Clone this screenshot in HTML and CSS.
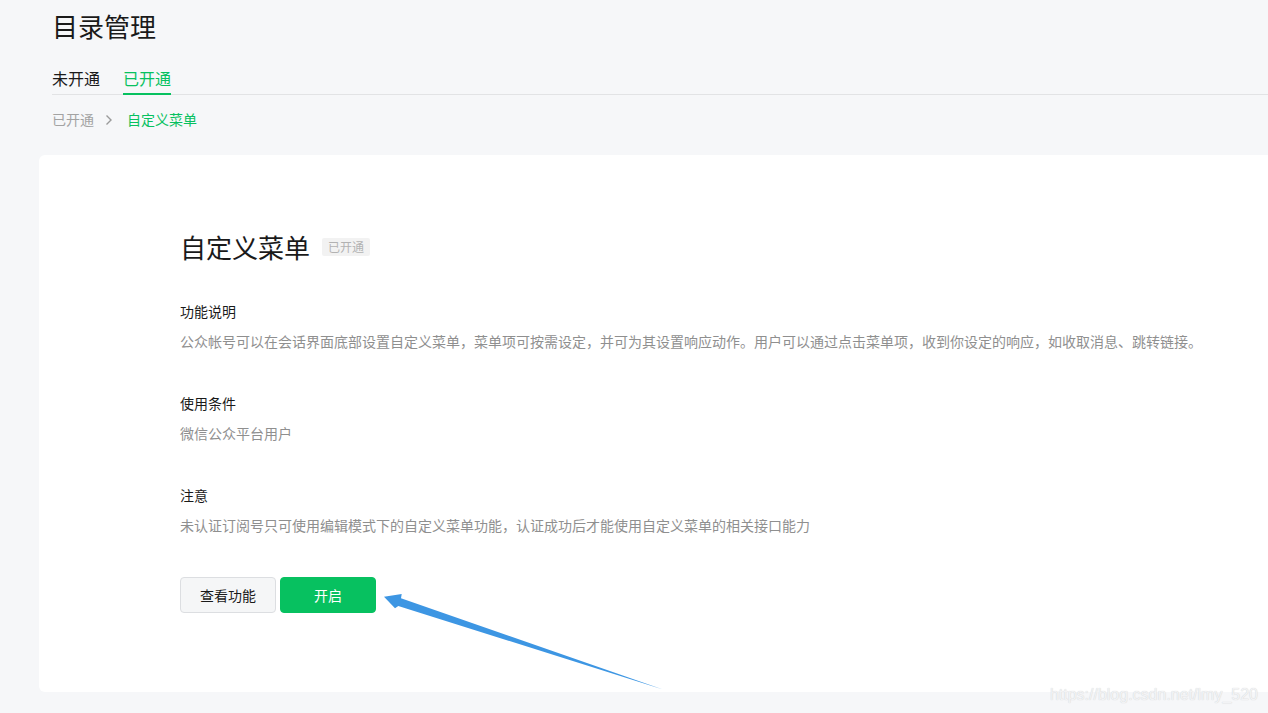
FILE: index.html
```html
<!DOCTYPE html>
<html lang="zh-CN">
<head>
<meta charset="utf-8">
<title>目录管理</title>
<link rel="stylesheet" href="styles.css">
</head>
<body>
<div class="page">
  <header class="head">
    <h1 class="page-title">目录管理</h1>
    <nav class="tabs">
      <a class="tab">未开通</a>
      <a class="tab tab-active">已开通</a>
    </nav>
    <div class="crumbs">
      <span class="crumb">已开通</span>
      <svg class="crumb-sep" width="8" height="12" viewBox="0 0 8 12"><path d="M1.5 1.5 L6 6 L1.5 10.5" fill="none" stroke="#9a9a9a" stroke-width="1.4"/></svg>
      <span class="crumb crumb-current">自定义菜单</span>
    </div>
  </header>

  <main class="card">
    <div class="card-title-row">
      <h2 class="card-title">自定义菜单</h2>
      <span class="tag">已开通</span>
    </div>

    <section class="sect sect-first">
      <h3 class="sect-head">功能说明</h3>
      <p class="sect-desc">公众帐号可以在会话界面底部设置自定义菜单，菜单项可按需设定，并可为其设置响应动作。用户可以通过点击菜单项，收到你设定的响应，如收取消息、跳转链接。</p>
    </section>

    <section class="sect">
      <h3 class="sect-head">使用条件</h3>
      <p class="sect-desc">微信公众平台用户</p>
    </section>

    <section class="sect">
      <h3 class="sect-head">注意</h3>
      <p class="sect-desc">未认证订阅号只可使用编辑模式下的自定义菜单功能，认证成功后才能使用自定义菜单的相关接口能力</p>
    </section>

    <div class="actions">
      <button class="btn btn-default">查看功能</button>
      <button class="btn btn-primary">开启</button>
    </div>
  </main>
</div>

<svg class="arrow" width="1268" height="713" viewBox="0 0 1268 713">
  <polygon points="384,596.7 401.7,594 401,598.3 663,689.5 398.3,606 395,608.3" fill="#3d96e3"/>
</svg>

<div class="watermark">https://blog.csdn.net/lmy_520</div>
</body>
</html>
```

FILE: styles.css
```css
html, body {
  margin: 0;
  padding: 0;
}
body {
  background: #f6f7f9;
  font-family: "Noto Sans CJK SC", "Noto Sans", sans-serif;
  color: #353535;
  overflow: hidden;
  height: 713px;
  position: relative;
}
.page {
  padding-left: 39px;
}
.head {
  padding-left: 13px;
}
.page-title {
  margin: 8px 0 0;
  font-size: 26px;
  line-height: 36px;
  font-weight: 400;
  color: #1a1a1a;
}
.tabs {
  display: flex;
  gap: 23px;
  margin-top: 22px;
  border-bottom: 1px solid #e2e3e5;
}
.tab {
  font-size: 16px;
  line-height: 24px;
  padding-bottom: 3px;
  border-bottom: 2px solid transparent;
  margin-bottom: -1px;
  color: #1a1a1a;
}
.tab-active {
  color: #07c160;
  border-bottom-color: #07c160;
}
.crumbs {
  display: flex;
  align-items: center;
  margin-top: 14px;
  height: 20px;
}
.crumb {
  font-size: 14px;
  line-height: 20px;
  color: #a3a3a3;
}
.crumb-sep {
  margin: 1px 14px 0 11px;
}
.crumb-current {
  color: #07c160;
}
.card {
  margin-top: 26px;
  margin-right: -20px;
  background: #fff;
  border-radius: 6px;
  padding: 74px 0 79px 141px;
}
.card-title-row {
  display: flex;
  align-items: center;
  height: 36px;
}
.card-title {
  margin: 0;
  font-size: 26px;
  line-height: 36px;
  font-weight: 400;
  color: #1a1a1a;
}
.tag {
  margin-left: 12px;
  margin-top: 0;
  font-size: 12px;
  line-height: 18px;
  padding: 0 6px;
  background: #f2f2f2;
  color: #b2b2b2;
  border-radius: 2px;
}
.sect {
  margin-top: 42px;
}
.sect-first {
  margin-top: 36px;
}
.sect-head {
  margin: 0;
  font-size: 14px;
  line-height: 20px;
  font-weight: 400;
  color: #1a1a1a;
}
.sect-desc {
  margin: 10px 0 0;
  font-size: 14px;
  line-height: 20px;
  color: #8f8f8f;
  white-space: nowrap;
}
.actions {
  display: flex;
  gap: 4px;
  margin-top: 42px;
}
.btn {
  width: 96px;
  height: 36px;
  border-radius: 4px;
  font-family: inherit;
  font-size: 14px;
  padding: 0 0 1px;
  cursor: pointer;
}
.btn-default {
  background: #f5f6f7;
  border: 1px solid #dcdee1;
  color: #1a1a1a;
}
.btn-primary {
  background: #07c160;
  border: 1px solid #07c160;
  color: #fff;
}
.arrow {
  position: absolute;
  left: 0;
  top: 0;
  pointer-events: none;
}
.watermark {
  position: absolute;
  right: 10px;
  top: 684px;
  font-family: "Liberation Sans", Arial, sans-serif;
  font-size: 16px;
  line-height: 22px;
  color: #f2f3f5;
  text-shadow: 0 0 1px #c9cacc;
}
```
